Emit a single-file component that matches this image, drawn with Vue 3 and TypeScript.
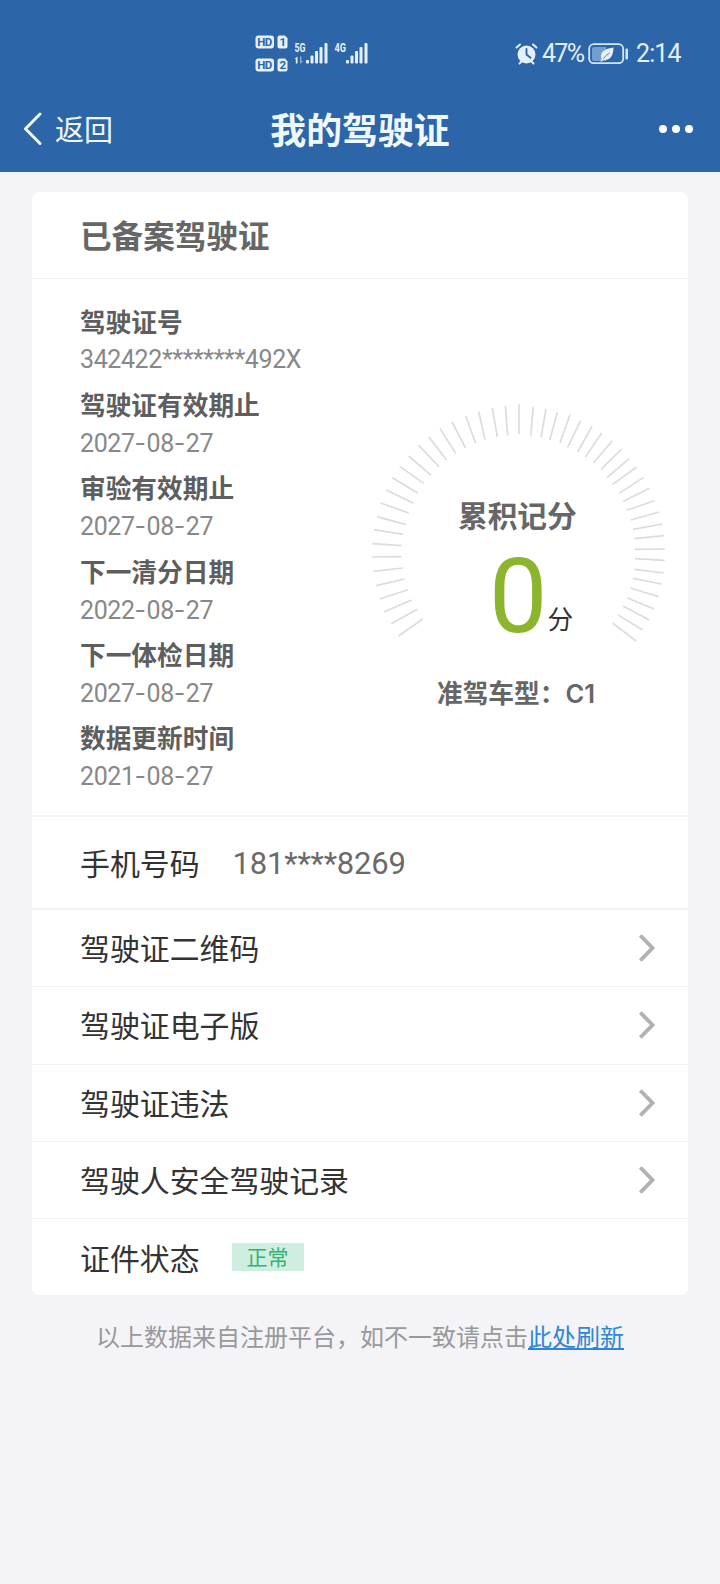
<script setup lang="ts">
interface Field {
  label: string
  value: string
}

type Tick = [number, number, number, number]

const fields: Field[] = [
  { label: '驾驶证号', value: '342422********492X' },
  { label: '驾驶证有效期止', value: '2027-08-27' },
  { label: '审验有效期止', value: '2027-08-27' },
  { label: '下一清分日期', value: '2022-08-27' },
  { label: '下一体检日期', value: '2027-08-27' },
  { label: '数据更新时间', value: '2021-08-27' },
]

const links: string[] = ['驾驶证二维码', '驾驶证电子版', '驾驶证违法', '驾驶人安全驾驶记录']

// Splits a value so that hyphens can be set in their own, wider face.
const parts = (value: string): string[] => value.split(/(-)/)

// Gauge ticks, clockwise from the lower left: outer point, inner point.
const ticks: Tick[] = [
  [116, 738, 188, 687], [94, 701, 172, 658], [73, 665, 155, 630], [59, 627, 144, 599],
  [48, 587, 134, 567], [41, 544, 129, 534], [36, 501, 125, 500], [37, 461, 125, 467],
  [42, 419, 129, 433], [51, 380, 138, 404], [62, 339, 146, 369], [79, 300, 160, 340],
  [97, 263, 173, 309], [119, 229, 191, 280], [146, 198, 213, 256], [176, 166, 237, 230],
  [206, 140, 260, 210], [240, 115, 287, 190], [276, 96, 317, 174], [317, 77, 347, 160],
  [356, 64, 375, 149], [397, 54, 412, 141], [436, 47, 443, 136], [477, 43, 477, 132],
  [520, 49, 512, 137], [558, 57, 543, 143], [592, 67, 569, 151], [630, 74, 600, 158],
  [662, 92, 623, 172], [696, 109, 653, 186], [725, 129, 676, 201], [757, 152, 700, 219],
  [785, 177, 723, 238], [808, 205, 741, 263], [830, 231, 758, 283], [851, 262, 777, 310],
  [868, 295, 790, 334], [883, 332, 800, 361], [897, 366, 812, 390], [907, 402, 819, 418],
  [912, 437, 823, 446], [914, 477, 825, 478], [914, 511, 825, 506], [911, 549, 824, 538],
  [904, 582, 819, 565], [896, 620, 811, 594], [882, 657, 801, 623], [868, 690, 789, 648],
  [848, 720, 774, 675], [828, 753, 758, 699],
]
</script>

<template>
  <div class="screen">
    <header class="header">
      <div class="status">
        <svg class="network" width="116" height="40" viewBox="0 0 116 40">
          <g fill="#e6f0fc">
            <rect x="0.5" y="0.5" width="18.5" height="13" rx="3" />
            <path d="M24.5 .5h5.500l2.500 2.700v8.300a2 2 0 0 1-2 2h-6a2 2 0 0 1-2-2v-9a2 2 0 0 1 2-2z" />
            <rect x="0.5" y="23.500" width="18.5" height="13" rx="3" />
            <path d="M24.500 23.500h5.500l2.500 2.700v8.300a2 2 0 0 1-2 2h-6a2 2 0 0 1-2-2v-9a2 2 0 0 1 2-2z" />
            <rect x="51" y="25" width="3" height="3.500" rx="1" />
            <rect x="55.500" y="20.500" width="3" height="8" rx="1" />
            <rect x="60" y="16" width="3" height="12.500" rx="1" />
            <rect x="64.500" y="12" width="3" height="16.500" rx="1" />
            <rect x="69.500" y="8" width="3" height="20.500" rx="1" />
            <rect x="91" y="25" width="3" height="3.500" rx="1" />
            <rect x="95.500" y="20.500" width="3" height="8" rx="1" />
            <rect x="100" y="16" width="3" height="12.500" rx="1" />
            <rect x="104.500" y="12" width="3" height="16.500" rx="1" />
            <rect x="109.500" y="8" width="3" height="20.500" rx="1" />
            <path d="M39.500 24l3-2.500v7h-1.700v-4.500z" />
            <path d="M45 21.500h1.500v4.500h2l-3 2.500h-.5z" opacity=".5" />
          </g>
          <g class="hd">
            <text x="2.300" y="11.200" textLength="15">HD</text>
            <text x="24.500" y="11.200">1</text>
            <text x="2.300" y="34.200" textLength="15">HD</text>
            <text x="24.500" y="34.200">2</text>
          </g>
          <g class="gen">
            <text x="39.500" y="17" textLength="11" lengthAdjust="spacingAndGlyphs">5G</text>
            <text x="79.500" y="17" textLength="11.500" lengthAdjust="spacingAndGlyphs">4G</text>
          </g>
        </svg>
        <div class="power">
          <svg width="23" height="22" viewBox="0 0 23 22">
            <circle cx="11.500" cy="11.500" r="9" fill="#e6f0fc" />
            <g fill="none" stroke="#e6f0fc" stroke-width="2" stroke-linecap="round">
              <path d="M1.500 4.500l3.500-3M21.500 4.500l-3.500-3M4.500 20.500l2-2M18.500 20.500l-2-2" />
            </g>
            <path d="M11.500 6v5.500l4 3.300" fill="none" stroke="#2c65a8" stroke-width="1.900" stroke-linecap="round" />
          </svg>
          <span class="percent">47%</span>
          <svg class="battery" width="41" height="22" viewBox="0 0 41 22">
            <rect x="1.200" y="1.200" width="34" height="19" rx="4.500" fill="none" stroke="#d5e6f8" stroke-width="1.800" />
            <path d="M6 4h12v14h-12a2 2 0 0 1-2-2v-10a2 2 0 0 1 2-2z" fill="#739fd0" />
            <path d="M25.500 4.500c-7 1-13 3.500-12.500 9.500q0 1.500.8 2l-1.600 2.300 1.500.3 1.800-1.800c7 .8 9.800-4 10-12.300z" fill="#e6f0fc" />
            <path d="M15.500 15.500q2.500-3.500 6-5.500" fill="none" stroke="#2c65a8" stroke-width=".8" />
            <rect x="37.500" y="5.500" width="2.500" height="11" rx="1" fill="#d5e6f8" />
          </svg>
          <span class="time">2:14</span>
        </div>
      </div>
      <div class="nav">
        <div class="back">
          <svg width="20" height="34" viewBox="0 0 20 34">
            <path d="M17 2L2.500 16.700 17 31.500" fill="none" stroke="#f0f8ff" stroke-width="3" stroke-linecap="round" stroke-linejoin="round" />
          </svg>
          <span>返回</span>
        </div>
        <h1 class="title">我的驾驶证</h1>
        <div class="more"><i></i><i></i><i></i></div>
      </div>
    </header>

    <main class="card">
      <h2 class="card-title">已备案驾驶证</h2>

      <section class="info">
        <dl class="fields">
          <div v-for="field in fields" :key="field.label" class="field">
            <dt>{{ field.label }}</dt>
            <dd><span v-for="(part, i) in parts(field.value)" :key="i" :class="{ dash: part === '-' }">{{ part }}</span></dd>
          </div>
        </dl>
        <div class="gauge">
          <svg class="dial" width="320" height="330" viewBox="0 0 960 990">
            <line v-for="(t, i) in ticks" :key="i" :x1="t[0]" :y1="t[1]" :x2="t[2]" :y2="t[3]" />
          </svg>
          <div class="gauge-label">累积记分</div>
          <div class="score"><span class="points">0</span><span class="unit">分</span></div>
          <div class="vehicle">准驾车型：<b>C1</b></div>
        </div>
      </section>

      <div class="row phone">
        <span class="name">手机号码</span>
        <span class="number">181****8269</span>
      </div>
      <div v-for="link in links" :key="link" class="row">
        <span class="name">{{ link }}</span>
        <svg class="chevron" width="18" height="30" viewBox="0 0 18 30">
          <path d="M2.300 2.500L14.500 15 2.300 27.500" fill="none" stroke="#b1b1b1" stroke-width="3.900" />
        </svg>
      </div>
      <div class="row last">
        <span class="name">证件状态</span>
        <span class="badge">正常</span>
      </div>
    </main>

    <p class="note">以上数据来自注册平台，如不一致请点击<a>此处刷新</a></p>
  </div>
</template>

<style>
body {
  background: #f3f3f8;
}
</style>

<style scoped>
.screen {
  width: 720px;
  height: 1584px;
  overflow: hidden;
  background: #f3f3f8;
  font-family: "Noto Sans CJK SC", sans-serif;
  color: #333;
}
.header {
  height: 172px;
  background: #2c65a8;
  color: #f0f8ff;
}
.status {
  display: flex;
  justify-content: space-between;
  height: 87px;
  padding: 35px 39px 0 255px;
  box-sizing: border-box;
}
.hd text {
  font: bold 11.500px Roboto, sans-serif;
  fill: #2c65a8;
}
.gen text {
  font: bold 12px Roboto, sans-serif;
  fill: #e6f0fc;
}
.power {
  display: flex;
  align-items: center;
  height: 38px;
  font: 25px/38px Roboto, sans-serif;
  color: #e3effc;
}
.percent {
  width: 46px;
  margin-left: 4px;
  letter-spacing: -1.700px;
}
.battery {
  margin-right: 7px;
}
.time {
  width: 45px;
  letter-spacing: -0.900px;
}
.nav {
  display: grid;
  grid-template-columns: 200px 1fr 200px;
  align-items: center;
  height: 84px;
}
.back {
  display: flex;
  align-items: center;
  gap: 12px;
  padding-left: 23px;
  font-size: 29px;
  line-height: 80px;
}
.back span {
  padding-bottom: 2px;
}
.title {
  margin: 0;
  padding-bottom: 2px;
  font-size: 35.900px;
  line-height: 80px;
  text-align: center;
}
.more {
  display: flex;
  justify-content: flex-end;
  gap: 5px;
  padding-right: 27px;
}
.more i {
  width: 8px;
  height: 8px;
  border-radius: 50%;
  background: #fff;
}
.card {
  margin: 20px 32px 0;
  height: 1103px;
  border-radius: 7px;
  background: #fff;
  overflow: hidden;
}
.card-title {
  box-sizing: border-box;
  height: 87px;
  margin: 0;
  padding-left: 48px;
  border-bottom: 1px solid #f0f0f2;
  font-size: 31.600px;
  line-height: 85px;
  color: #666;
}
.info {
  display: flex;
  box-sizing: border-box;
  height: 538px;
  border-bottom: 2px solid #f5f5f7;
}
.fields {
  width: 280px;
  margin: 0;
  padding: 21.500px 0 0 48px;
}
.field {
  height: 83.400px;
}
dt {
  font-size: 25.700px;
  font-weight: bold;
  line-height: 40px;
  color: #5e5e5e;
  white-space: nowrap;
}
dd {
  margin: 0;
  font: 25px/38px Roboto, sans-serif;
  letter-spacing: -0.400px;
  color: #888;
}
.dash {
  font-family: Inter, sans-serif;
  letter-spacing: 0.400px;
}
.gauge {
  position: relative;
  width: 320px;
  height: 330px;
  margin-top: 111px;
  color: #666;
  font-weight: bold;
}
.dial {
  position: absolute;
  inset: 0;
}
.dial line {
  stroke: #dcdcdc;
  stroke-width: 5;
}
.gauge-label {
  padding: 103px 0 0 98px;
  font-size: 29.700px;
  line-height: 44px;
}
.score {
  display: flex;
  align-items: baseline;
  height: 126px;
  padding: 2px 0 0 129px;
  font-weight: normal;
}
.points {
  font: 104px/116px Roboto, sans-serif;
  color: #8cb42c;
}
.unit {
  padding-bottom: 4px;
  align-self: flex-end;
  margin-bottom: 28px;
  font-size: 25.700px;
  line-height: 30px;
  color: #333;
}
.vehicle {
  padding: 7px 0 0 77px;
  font-size: 25.700px;
  line-height: 40px;
}
.vehicle b {
  font: 600 25.500px Inter, sans-serif;
}
.row {
  display: flex;
  align-items: center;
  box-sizing: border-box;
  height: 77.330px;
  padding: 0 32px 0 48px;
  border-bottom: 1px solid #f2f2f4;
  font-size: 29.900px;
  line-height: 60px;
}
.name {
  padding-bottom: 2px;
}
.phone {
  height: 93px;
  border-bottom-width: 2px;
}
.number {
  margin-left: 33px;
  padding-top: 3px;
  font: 31px/60px Roboto, sans-serif;
  letter-spacing: -0.200px;
  color: #6a6a6a;
}
.chevron {
  margin-left: auto;
}
.last {
  border-bottom: 0;
}
.badge {
  width: 72px;
  height: 28px;
  margin: 0 0 1px 32px;
  background: #d0eee0;
  font-size: 21px;
  line-height: 27px;
  text-align: center;
  color: #2fb574;
}
.note {
  margin: 21px 0 0;
  font-size: 24px;
  line-height: 40px;
  text-align: center;
  color: #999;
}
.note a {
  color: #2f86d8;
  text-decoration: underline;
}
</style>
